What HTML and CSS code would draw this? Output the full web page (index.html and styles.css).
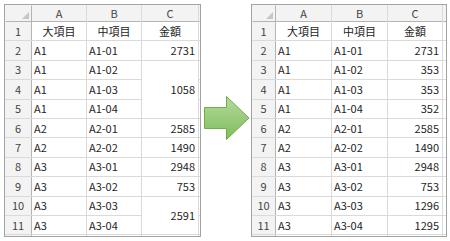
FILE: index.html
```html
<!DOCTYPE html>
<html lang="ja">
<head>
<meta charset="utf-8">
<link rel="stylesheet" href="styles.css">
</head>
<body>
<div class="page">
  <div class="sheet sheet-left">
    <div class="grid">
      <div class="hd corner"><span class="tri"></span></div><div class="hd">A</div><div class="hd">B</div><div class="hd">C</div><div class="hd"></div>
      <div class="rh">1</div><div class="c ctr">大項目</div><div class="c ctr">中項目</div><div class="c ctr">金額</div><div class="c"></div>
      <div class="rh">2</div><div class="c">A1</div><div class="c">A1-01</div><div class="c num">2731</div><div class="c"></div>
      <div class="rh">3</div><div class="c">A1</div><div class="c">A1-02</div><div class="c num m3">1058</div><div class="c"></div>
      <div class="rh">4</div><div class="c">A1</div><div class="c">A1-03</div><div class="c"></div>
      <div class="rh">5</div><div class="c">A1</div><div class="c">A1-04</div><div class="c"></div>
      <div class="rh">6</div><div class="c">A2</div><div class="c">A2-01</div><div class="c num">2585</div><div class="c"></div>
      <div class="rh">7</div><div class="c">A2</div><div class="c">A2-02</div><div class="c num">1490</div><div class="c"></div>
      <div class="rh">8</div><div class="c">A3</div><div class="c">A3-01</div><div class="c num">2948</div><div class="c"></div>
      <div class="rh">9</div><div class="c">A3</div><div class="c">A3-02</div><div class="c num">753</div><div class="c"></div>
      <div class="rh">10</div><div class="c">A3</div><div class="c">A3-03</div><div class="c num m2">2591</div><div class="c"></div>
      <div class="rh">11</div><div class="c">A3</div><div class="c">A3-04</div><div class="c"></div>
      <div class="rh"></div><div class="c"></div><div class="c"></div><div class="c"></div><div class="c"></div>
    </div>
  </div>
  <div class="arrow">
    <svg width="50" height="233" viewBox="0 0 50 233">
      <defs>
        <linearGradient id="ag" x1="0" y1="0" x2="0" y2="1">
          <stop offset="0" stop-color="#b5d99c"/>
          <stop offset="1" stop-color="#7fbd5c"/>
        </linearGradient>
      </defs>
      <path d="M3.5 103.5 H25.5 V92.5 L48 114 L25.5 135.5 V124.5 H3.5 Z" fill="url(#ag)" stroke="#70ad47" stroke-width="1"/>
    </svg>
  </div>
  <div class="sheet sheet-right">
    <div class="grid">
      <div class="hd corner"><span class="tri"></span></div><div class="hd">A</div><div class="hd">B</div><div class="hd">C</div><div class="hd"></div>
      <div class="rh">1</div><div class="c ctr">大項目</div><div class="c ctr">中項目</div><div class="c ctr">金額</div><div class="c"></div>
      <div class="rh">2</div><div class="c">A1</div><div class="c">A1-01</div><div class="c num">2731</div><div class="c"></div>
      <div class="rh">3</div><div class="c">A1</div><div class="c">A1-02</div><div class="c num">353</div><div class="c"></div>
      <div class="rh">4</div><div class="c">A1</div><div class="c">A1-03</div><div class="c num">353</div><div class="c"></div>
      <div class="rh">5</div><div class="c">A1</div><div class="c">A1-04</div><div class="c num">352</div><div class="c"></div>
      <div class="rh">6</div><div class="c">A2</div><div class="c">A2-01</div><div class="c num">2585</div><div class="c"></div>
      <div class="rh">7</div><div class="c">A2</div><div class="c">A2-02</div><div class="c num">1490</div><div class="c"></div>
      <div class="rh">8</div><div class="c">A3</div><div class="c">A3-01</div><div class="c num">2948</div><div class="c"></div>
      <div class="rh">9</div><div class="c">A3</div><div class="c">A3-02</div><div class="c num">753</div><div class="c"></div>
      <div class="rh">10</div><div class="c">A3</div><div class="c">A3-03</div><div class="c num">1296</div><div class="c"></div>
      <div class="rh">11</div><div class="c">A3</div><div class="c">A3-04</div><div class="c num">1295</div><div class="c"></div>
      <div class="rh"></div><div class="c"></div><div class="c"></div><div class="c"></div><div class="c"></div>
    </div>
  </div>
</div>
</body>
</html>
```

FILE: styles.css
```css
* { box-sizing: border-box; }
body {
  margin: 0;
  background: #fff;
  font-family: "Noto Sans CJK JP", sans-serif;
}
.page {
  display: flex;
  align-items: flex-start;
  padding: 4px;
}
.sheet {
  flex: none;
  height: 233px;
  border: 1px solid #a3a3a3;
  overflow: hidden;
  background: #fff;
}
.sheet-left { width: 197px; }
.sheet-right { width: 196px; }
.grid {
  display: grid;
  gap: 1px;
  background: #dadada;
  grid-template-rows: 16px repeat(12, 18.4px);
  font-size: 11px;
  line-height: 1;
  color: #1e1e1e;
}
.sheet-left .grid { grid-template-columns: 26px 54px 54px 56px 20px; }
.sheet-right .grid { grid-template-columns: 23px 55px 55px 54px 20px; }
.hd, .rh {
  background: #f3f3f3;
  color: #444;
  display: flex;
  align-items: center;
  justify-content: center;
}
.hd { box-shadow: 0 1px 0 #b4b4b4; }
.rh { box-shadow: 1px 0 0 #b4b4b4; }
.corner {
  position: relative;
  box-shadow: 1px 1px 0 #b4b4b4;
}
.tri {
  position: absolute;
  right: 2px;
  bottom: 2px;
  width: 0;
  height: 0;
  border-style: solid;
  border-width: 0 0 7px 7px;
  border-color: transparent transparent #c6c6c6 transparent;
}
.c {
  background: #fff;
  display: flex;
  align-items: center;
  padding: 0 2px;
  white-space: nowrap;
}
.ctr { justify-content: center; }
.num { justify-content: flex-end; padding-right: 3px; }
.m3 { grid-row: span 3; }
.m2 { grid-row: span 2; }
.arrow {
  flex: none;
  width: 50px;
  height: 233px;
}
.arrow svg { display: block; }
```
